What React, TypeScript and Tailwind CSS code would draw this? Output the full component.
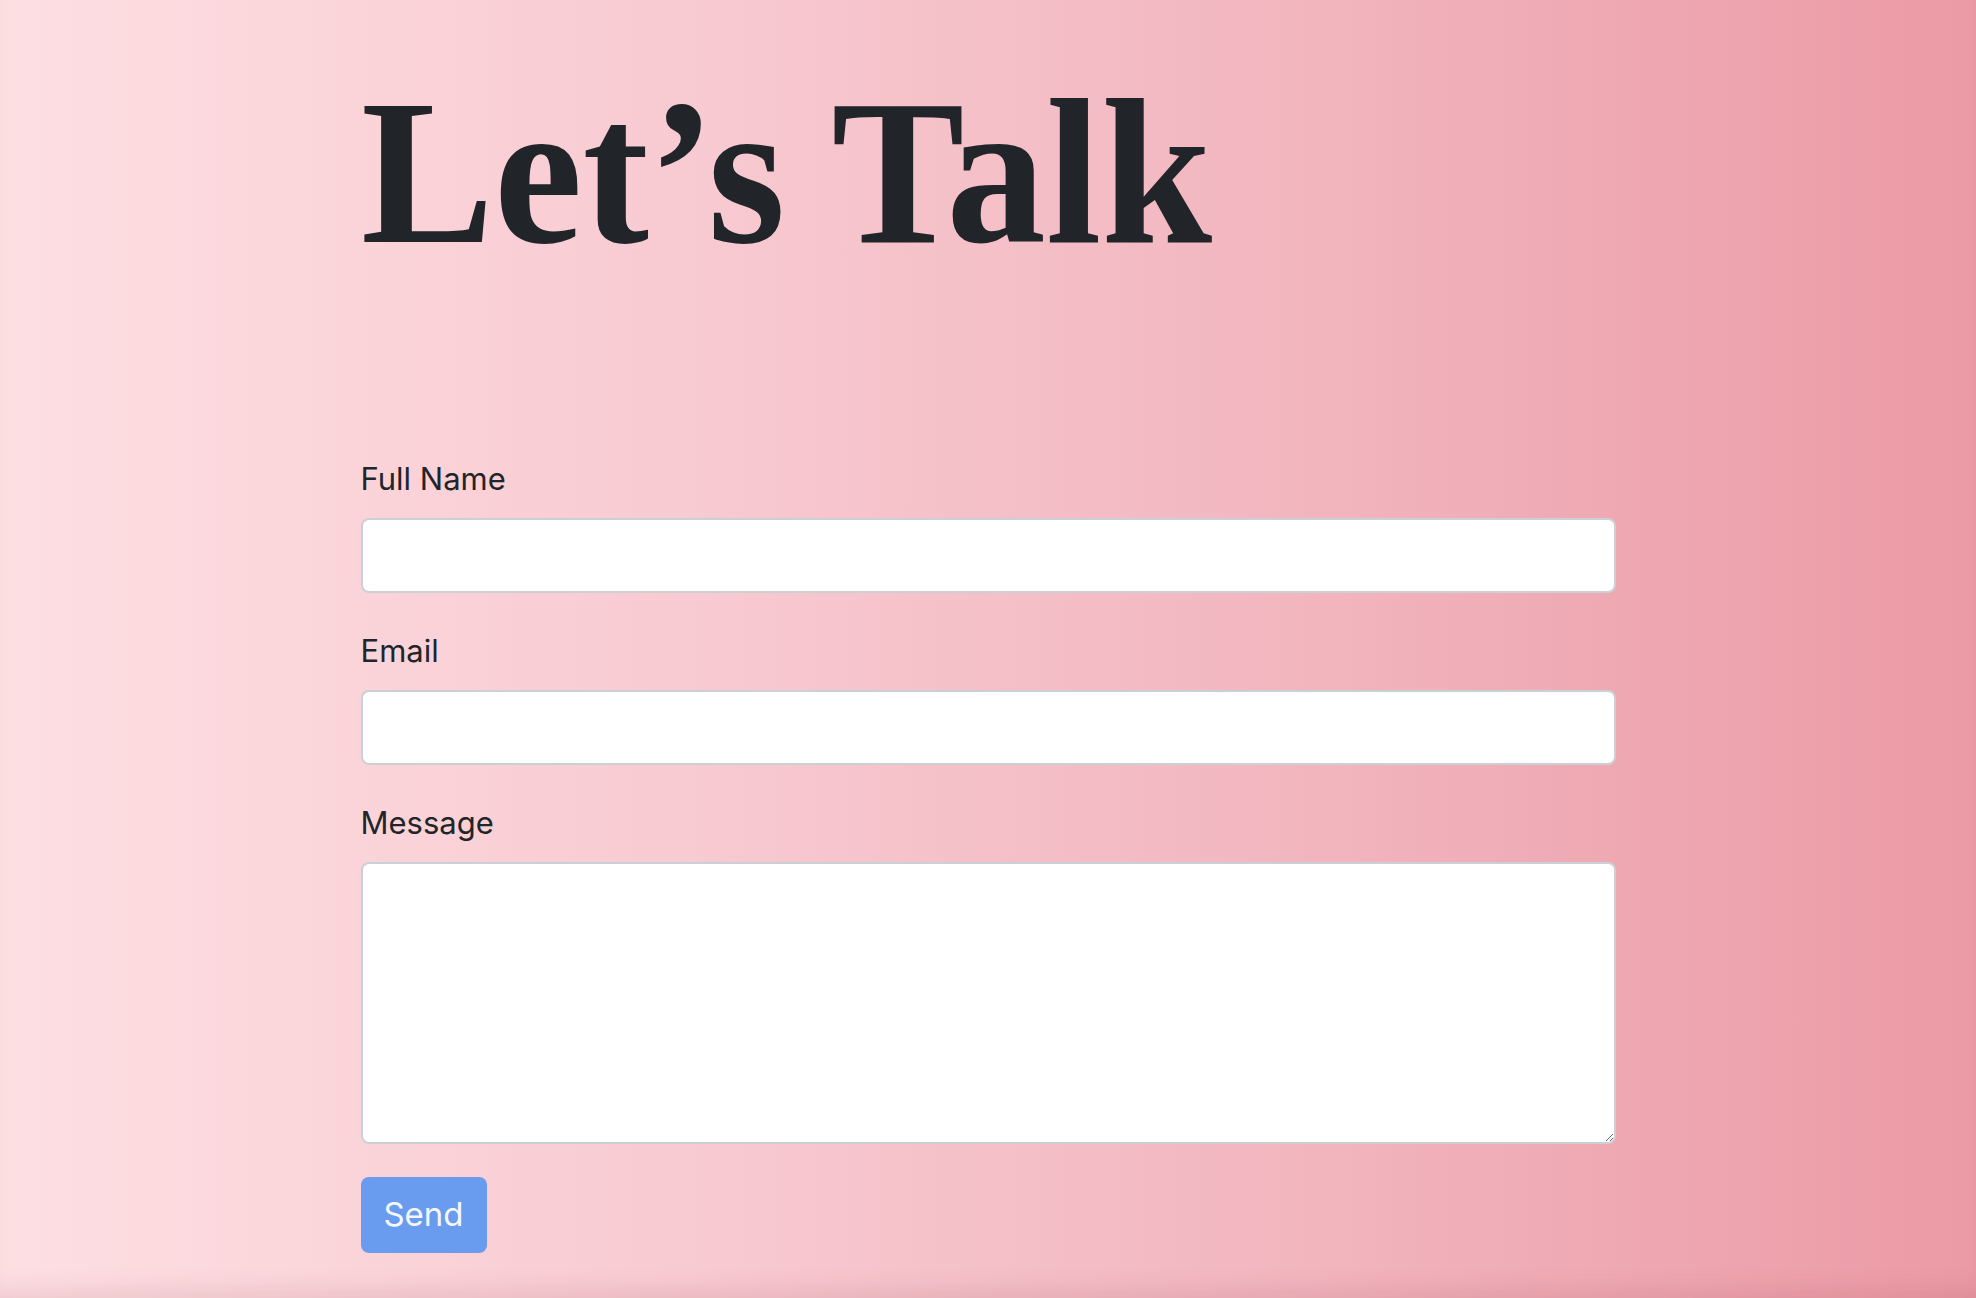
const FIELDS = [
  { id: "name", label: "Full Name", type: "text" },
  { id: "email", label: "Email", type: "email" },
];

export default function App() {
  return (
    <main className="min-h-screen w-full bg-[linear-gradient(to_right,#fddfe2_0%,#f8cad1_35%,#f2b6bf_65%,#eb9aa5_100%)] shadow-[inset_0_-22px_24px_-14px_rgba(120,40,60,0.12)]">
      <div className="mx-auto w-[1255px] pb-[46px] pt-[69px]">
        <h1 className="w-fit origin-left scale-x-[0.963] font-['Liberation_Serif',serif] text-[207px] font-bold leading-none text-[#212529]">
          Let’s Talk
        </h1>

        <form className="mt-[179px] flex flex-col font-['Inter',sans-serif] text-[#212529]">
          {FIELDS.map((f) => (
            <div key={f.id} className="mb-[34px] flex flex-col">
              <label htmlFor={f.id} className="mb-[15px] text-[31px] leading-[48px]">
                {f.label}
              </label>
              <input
                id={f.id}
                type={f.type}
                className="h-[75px] w-full rounded-[8px] border-2 border-[#cbd0d6] bg-white px-4 text-[28px] outline-none"
              />
            </div>
          ))}
          <div className="flex flex-col">
            <label htmlFor="message" className="mb-[15px] text-[31px] leading-[48px]">
              Message
            </label>
            <textarea
              id="message"
              className="h-[282px] w-full rounded-[8px] border-2 border-[#cbd0d6] bg-white px-4 py-3 text-[28px] outline-none"
            />
          </div>
          <button
            type="button"
            className="mt-[33px] h-[76px] w-[126px] rounded-[8px] bg-[#699cee] text-[33px] text-[#f4f7fe]"
          >
            Send
          </button>
        </form>
      </div>
    </main>
  );
}
